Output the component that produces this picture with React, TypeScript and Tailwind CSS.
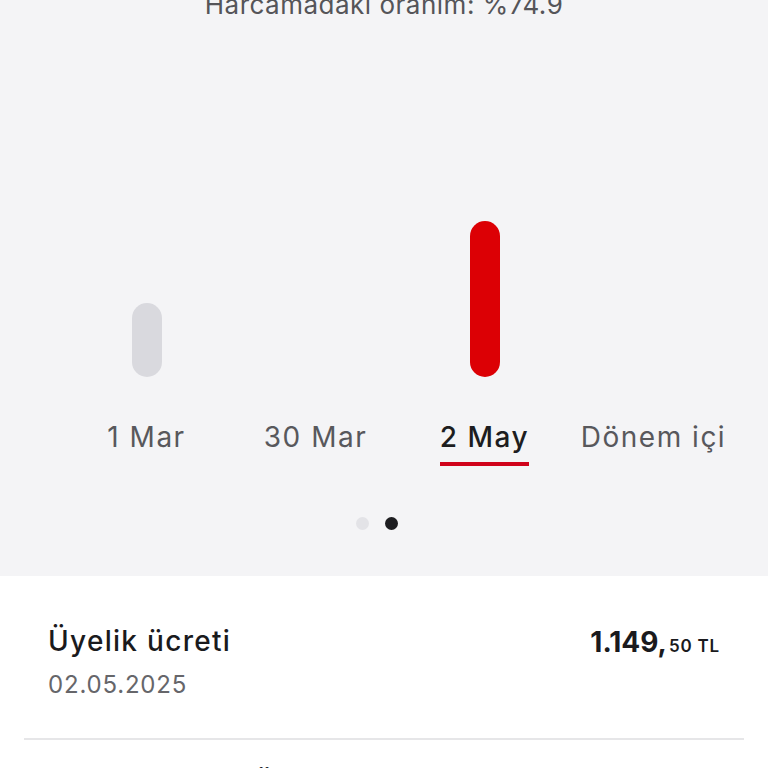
import React from "react";

const cols = [
  { label: "1 Mar", h: 74, color: "bg-[#d9d9de]", active: false },
  { label: "30 Mar", h: 0, color: "", active: false },
  { label: "2 May", h: 156, color: "bg-[#dc0005]", active: true },
  { label: "Dönem içi", h: 0, color: "", active: false },
];

export default function App() {
  return (
    <div className="w-[768px] h-[768px] overflow-hidden bg-white" style={{ fontFamily: "Inter, Lato, sans-serif" }}>
      <div className="bg-[#f4f4f6] h-[576px] flex flex-col">
        <div className="h-[20px] w-full overflow-hidden flex justify-center items-start">
          <div className="text-[26px] leading-[30px] tracking-[0.5px] text-[#555559] mt-[-10px]">Harcamadaki oranım: %74.9</div>
        </div>
        <div className="w-[676px] ml-[62px] mt-[201px] grid grid-cols-4">
          {cols.map((c) => (
            <div key={c.label} className="flex flex-col items-center">
              <div className="h-[156px] flex items-end">
                {c.h > 0 && <div className={`w-[30px] rounded-full ${c.color}`} style={{ height: c.h }} />}
              </div>
              <div className="mt-[43px] flex flex-col items-center">
                <div className={`text-[28px] leading-[34px] tracking-[1.5px] ${c.active ? "text-[#1d1d20] font-medium" : "text-[#58585c]"}`}>{c.label}</div>
                <div className={`mt-[8px] h-[4px] w-full ${c.active ? "bg-[#d0021b]" : "bg-transparent"}`} />
              </div>
            </div>
          ))}
        </div>
        <div className="mt-[51px] flex justify-center gap-[16px] ml-[-14px]">
          <div className="w-[13px] h-[13px] rounded-full bg-[#e3e3e7]" />
          <div className="w-[13px] h-[13px] rounded-full bg-[#1d1d20]" />
        </div>
      </div>
      <div className="px-[24px]">
        <div className="px-[24px] pt-[48px] pb-[39px] flex justify-between">
          <div>
            <div className="text-[28px] leading-[34px] tracking-[1.3px] text-[#1a1a1d] font-medium">Üyelik ücreti</div>
            <div className="mt-[13px] text-[24px] leading-[28px] tracking-[0.8px] text-[#66666a]">02.05.2025</div>
          </div>
          <div className="flex items-baseline text-[#1a1a1d] pt-[1px]">
            <span className="text-[28px] leading-[34px] font-bold">1.149,</span>
            <span className="text-[17px] font-semibold tracking-[0.8px] ml-[2px]">50 TL</span>
          </div>
        </div>
        <div className="h-[2px] bg-[#e6e6e8]" />
        <div className="px-[24px] pt-[27px] flex">
          <div className="text-[28px] leading-[34px] tracking-[1.3px] text-[#1a1a1d] font-medium">Hesap işletim Ücreti</div>
        </div>
      </div>
    </div>
  );
}
